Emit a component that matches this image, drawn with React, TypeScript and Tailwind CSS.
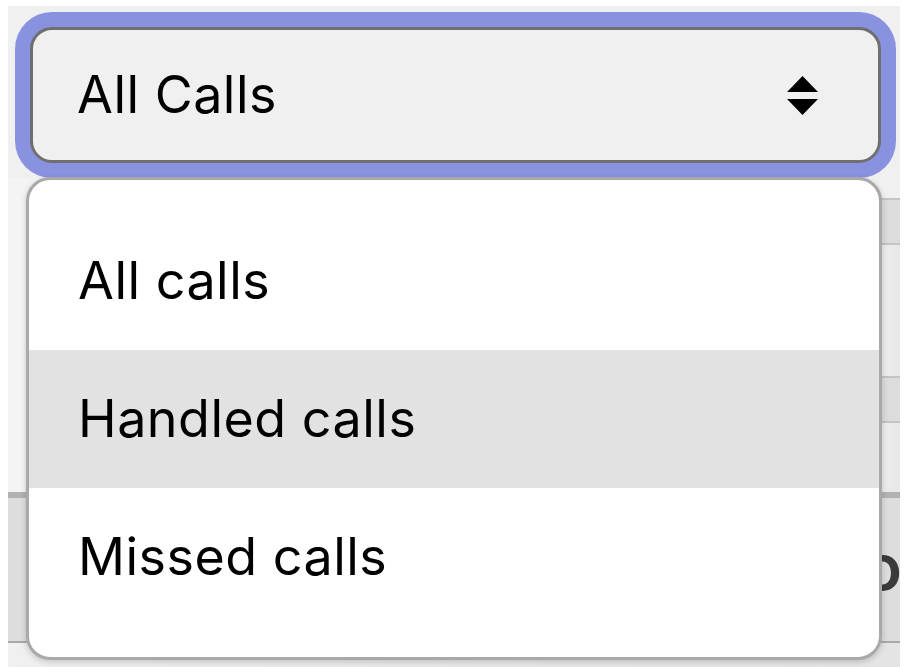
import React from "react";

const font = { fontFamily: "Inter, 'Noto Sans', sans-serif" };

export default function App() {
  return (
    <div className="relative w-[910px] h-[667px] overflow-hidden bg-white" style={font}>
      <div className="ml-[8px] mr-[10px] mt-[6px] h-[661px] bg-[#f0f0f0] flex flex-col">
        {/* select */}
        <div className="ml-[22px] mt-[21px] w-[851px] h-[136px] shrink-0 rounded-[22px] border-[3px] border-[#6f6f6f] bg-[#f0f0f0] shadow-[0_0_0_15px_#8892df] flex items-center justify-between pl-[44px] pr-[60px]">
          <span className="text-[52px] leading-none text-black tracking-[0.5px]">All Calls</span>
          <svg width="31" height="40" viewBox="0 0 31 40" className="mt-[1px]">
            <polygon points="15.5,0 31,16 0,16" fill="#000" />
            <polygon points="0,23 31,23 15.5,39" fill="#000" />
          </svg>
        </div>
        {/* table behind */}
        <div className="mt-[15px] flex flex-col flex-1">
          <div className="flex h-[314px]">
            <div className="flex-1 bg-gradient-to-r from-[#f4f4f4] to-[#eaeaea]" />
            <div className="w-[40px] flex flex-col pt-[20px]">
              <div className="h-[47px] border-t-2 border-b-2 border-[#c4c4c4] bg-[#dcdcdc]" />
              <div className="h-[131px] bg-gradient-to-r from-[#f2f2f2] to-[#e8e8e8]" />
              <div className="h-[47px] border-t-2 border-b-2 border-[#c4c4c4] bg-[#dcdcdc]" />
              <div className="flex-1 bg-gradient-to-r from-[#f2f2f2] to-[#e8e8e8]" />
            </div>
          </div>
          <div className="h-[6px] bg-[#b2b2b2]" />
          <div className="flex h-[143px] bg-[#dddddd]">
            <div className="flex-1" />
            <div className="w-[40px] flex items-center justify-end overflow-hidden">
              <span className="text-[64px] font-semibold leading-none text-[#3a3a3a] mr-[-2px] mt-[-6px]">o</span>
            </div>
          </div>
          <div className="h-[2px] bg-[#a9a9a9]" />
          <div className="flex-1 bg-gradient-to-r from-[#f0f0f0] to-[#e4e4e4]" />
        </div>
      </div>
      {/* dropdown menu */}
      <div className="absolute left-[26px] top-[177px] w-[856px] h-[483px] rounded-[24px] border-[3px] border-[#a9a9a9] bg-white shadow-[0_2px_6px_rgba(0,0,0,0.18)] pt-[32px] overflow-hidden">
        {["All calls", "Handled calls", "Missed calls"].map((t, i) => (
          <div
            key={t}
            className={`h-[138px] flex items-center pl-[49px] ${i === 1 ? "bg-[#e2e2e2]" : "bg-white"}`}
          >
            <span className="text-[52px] leading-none text-black tracking-[0.5px]">{t}</span>
          </div>
        ))}
      </div>
    </div>
  );
}
